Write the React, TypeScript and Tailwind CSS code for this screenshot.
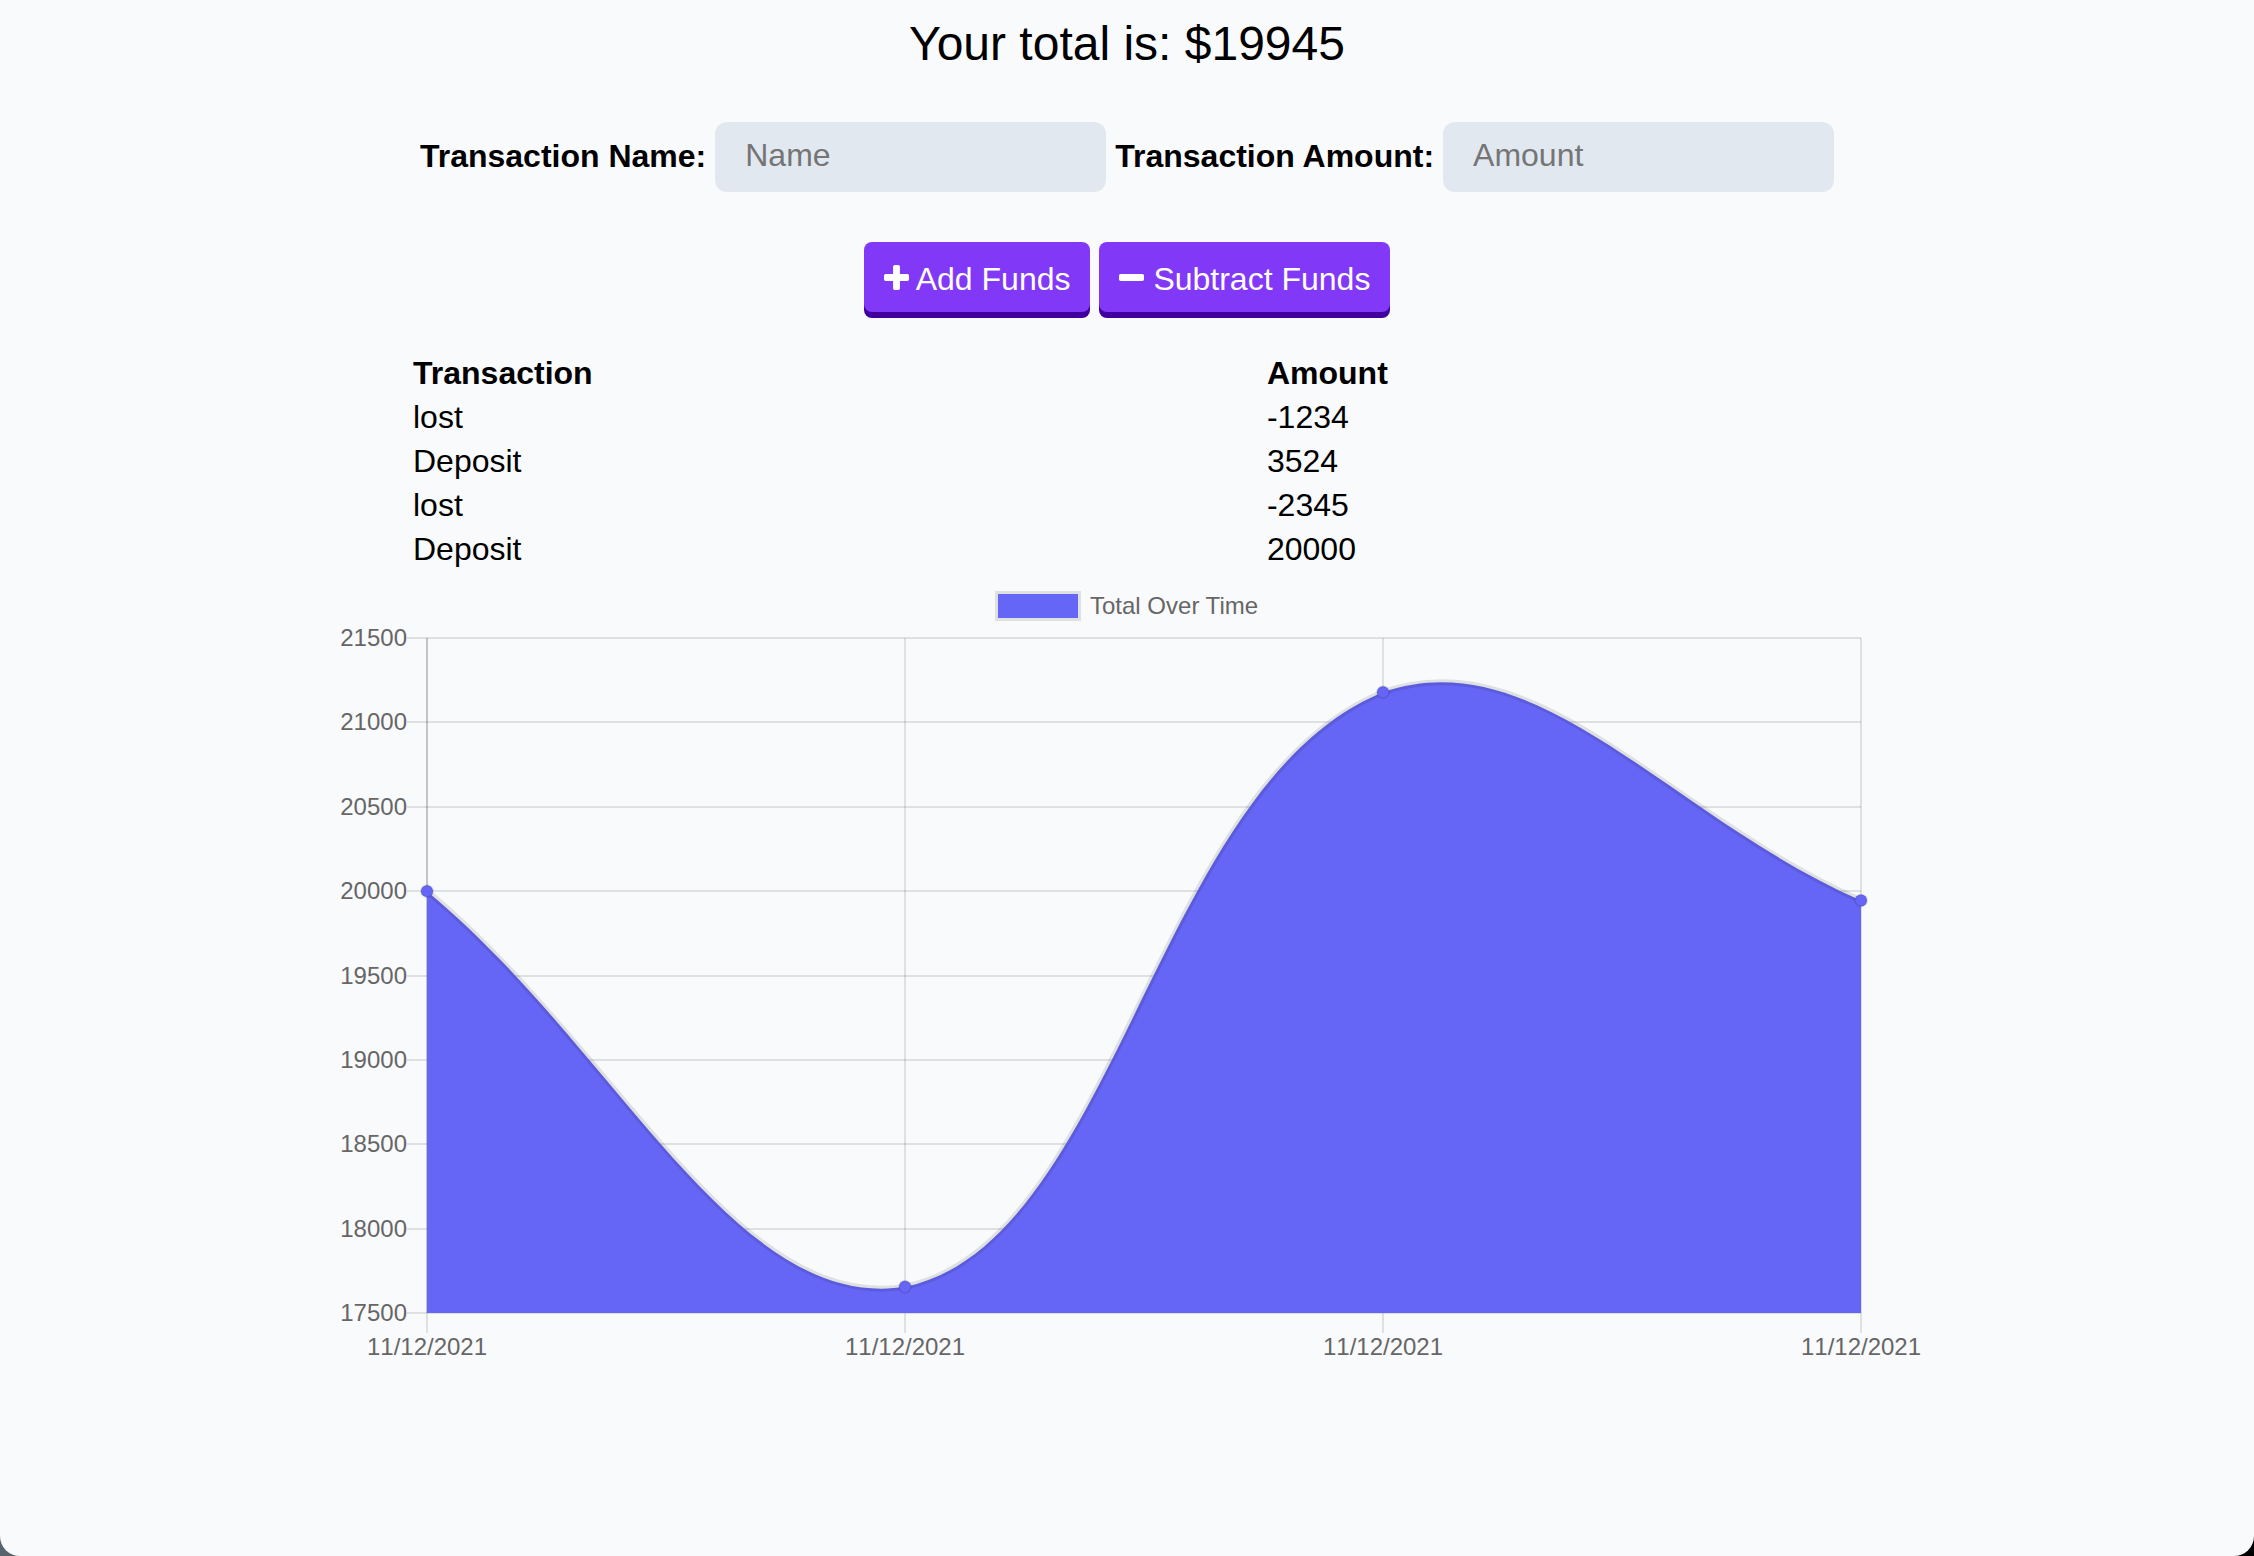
import React from "react";

type Point = { x: number; y: number };

const transactions = [
  { name: "lost", amount: "-1234" },
  { name: "Deposit", amount: "3524" },
  { name: "lost", amount: "-2345" },
  { name: "Deposit", amount: "20000" },
];

const totals = [
  { date: "11/12/2021", value: 20000 },
  { date: "11/12/2021", value: 17655 },
  { date: "11/12/2021", value: 21179 },
  { date: "11/12/2021", value: 19945 },
];

const ticks = [21500, 21000, 20500, 20000, 19500, 19000, 18500, 18000, 17500];

const area = { left: 96, right: 1530, top: 67, bottom: 742 };
const tension = 0.4;

const xAt = (i: number) => area.left + (i * (area.right - area.left)) / (totals.length - 1);
const yAt = (v: number) => area.top + ((21500 - v) / 4000) * (area.bottom - area.top);

const distance = (a: Point, b: Point) => Math.hypot(a.x - b.x, a.y - b.y);

// Control points stay inside the plot so the curve never overshoots it.
const cap = (p: Point): Point => ({
  x: Math.min(Math.max(p.x, area.left), area.right),
  y: Math.min(Math.max(p.y, area.top), area.bottom),
});

function controls(points: Point[], i: number) {
  const cur = points[i];
  const prev = points[i - 1] ?? cur;
  const next = points[i + 1] ?? cur;
  const before = distance(prev, cur);
  const after = distance(cur, next);
  const fa = (tension * before) / (before + after);
  const fb = (tension * after) / (before + after);
  return {
    incoming: cap({ x: cur.x - fa * (next.x - prev.x), y: cur.y - fa * (next.y - prev.y) }),
    outgoing: cap({ x: cur.x + fb * (next.x - prev.x), y: cur.y + fb * (next.y - prev.y) }),
  };
}

function curve(points: Point[]) {
  let d = `M${points[0].x} ${points[0].y}`;
  for (let i = 1; i < points.length; i++) {
    const a = controls(points, i - 1).outgoing;
    const b = controls(points, i).incoming;
    d += ` C${a.x} ${a.y} ${b.x} ${b.y} ${points[i].x} ${points[i].y}`;
  }
  return d;
}

function TotalChart() {
  const points = totals.map((t, i) => ({ x: xAt(i), y: yAt(t.value) }));
  const line = curve(points);
  return (
    <svg
      viewBox="0 0 1592 796"
      role="img"
      aria-label="Total Over Time"
      className="block w-full max-w-[1592px] text-[24px] [font-family:'Liberation_Sans',Arial,sans-serif]"
    >
      <defs>
        <clipPath id="chart-area">
          <rect x={area.left} y={area.top} width={area.right - area.left} height={area.bottom - area.top} />
        </clipPath>
      </defs>

      <rect x="667" y="23" width="80" height="24" fill="none" stroke="#000" strokeOpacity="0.1" strokeWidth="6" />
      <rect x="667" y="23" width="80" height="24" fill="#6666f6" />
      <text x="759" y="43" fill="#666">
        Total Over Time
      </text>

      {totals.map((t, i) => (
        <g key={i}>
          <line
            x1={Math.round(xAt(i))}
            x2={Math.round(xAt(i))}
            y1={area.top}
            y2={area.bottom + 20}
            stroke="#000"
            strokeOpacity="0.1"
            strokeWidth="2"
          />
          <text x={xAt(i)} y="784" textAnchor="middle" fill="#666" className="[font-kerning:none]">
            {t.date}
          </text>
        </g>
      ))}
      <line x1={area.left} x2={area.left} y1={area.top} y2={area.bottom} stroke="#000" strokeOpacity="0.12" strokeWidth="2" />
      {ticks.map((v) => (
        <g key={v}>
          <line
            x1={area.left - 20}
            x2={area.right}
            y1={Math.round(yAt(v))}
            y2={Math.round(yAt(v))}
            stroke="#000"
            strokeOpacity="0.1"
            strokeWidth="2"
          />
          <text x={area.left - 20} y={Math.round(yAt(v)) + 8} textAnchor="end" fill="#666">
            {v}
          </text>
        </g>
      ))}

      <g clipPath="url(#chart-area)">
        <path d={`${line} L${area.right} ${area.bottom} L${area.left} ${area.bottom} Z`} fill="#6666f6" />
        <path d={line} fill="none" stroke="#000" strokeOpacity="0.1" strokeWidth="6" />
      </g>
      {points.map((p, i) => (
        <circle key={i} cx={p.x} cy={p.y} r="6" fill="#6666f6" stroke="#000" strokeOpacity="0.1" strokeWidth="2" />
      ))}
    </svg>
  );
}

function PlusIcon() {
  return (
    <svg viewBox="0 0 22 22" aria-hidden="true" className="inline-block size-[25px] align-baseline" fill="currentColor">
      <path d="M22 9.5v3q0 .625-.438 1.063T20.5 14H14v6.500q0 .625-.438 1.063T12.500 22h-3q-.625 0-1.063-.438T8 20.500V14H1.500q-.625 0-1.063-.438T0 12.500v-3q0-.625.438-1.063T1.500 8H8V1.500q0-.625.438-1.063T9.500 0h3q.625 0 1.063.438T14 1.500V8h6.500q.625 0 1.063.438T22 9.500z" />
    </svg>
  );
}

function MinusIcon() {
  return (
    <svg viewBox="0 0 22 22" aria-hidden="true" className="inline-block size-[25px] align-baseline" fill="currentColor">
      <path d="M22 9.500v3q0 .625-.438 1.063T20.500 14h-19q-.625 0-1.063-.438T0 12.500v-3q0-.625.438-1.063T1.500 8h19q.625 0 1.063.438T22 9.500z" />
    </svg>
  );
}

const buttonClass =
  "h-[70px] cursor-pointer whitespace-nowrap rounded-lg bg-[#8139f7] px-5 pt-1 text-[32px] leading-[36px] text-white shadow-[0_6px_0_#41009e]";
const inputClass =
  "h-[70px] w-[391px] rounded-xl bg-slate-200 px-[30px] pb-1 text-[32px] text-black placeholder:text-[#757575] placeholder:opacity-100";
const labelClass = "whitespace-nowrap pb-0.5 text-[32px] leading-[36px] font-bold";

export default function App() {
  return (
    <div className="min-h-screen bg-linear-to-r from-[#59636b] to-black text-black [font-family:'Liberation_Sans',Arial,sans-serif]">
      <main className="flex min-h-screen flex-col items-center rounded-b-[20px] bg-[#f9fafc] pt-4">
        <h1 className="text-[48px] leading-[56px]">
          Your total is: $<span>19945</span>
        </h1>

        <form className="mt-[50px] flex flex-col items-center gap-[50px]" onSubmit={(e) => e.preventDefault()}>
          <div className="flex flex-wrap items-center justify-center gap-[9px]">
            <label htmlFor="t-name" className={labelClass}>
              Transaction Name:
            </label>
            <input id="t-name" type="text" placeholder="Name" className={inputClass} />
            <label htmlFor="t-amount" className={labelClass}>
              Transaction Amount:
            </label>
            <input id="t-amount" type="text" inputMode="decimal" placeholder="Amount" className={inputClass} />
          </div>
          <div className="flex flex-wrap justify-center gap-[9px]">
            <button type="button" className={buttonClass}>
              <PlusIcon /> Add Funds
            </button>
            <button type="button" className={buttonClass}>
              <MinusIcon /> Subtract Funds
            </button>
          </div>
        </form>

        <table className="mt-[39px] w-full max-w-[1428px] table-fixed text-left text-[32px] leading-[44px]">
          <colgroup>
            <col className="w-[59.8%]" />
            <col />
          </colgroup>
          <thead>
            <tr>
              <th scope="col">Transaction</th>
              <th scope="col">Amount</th>
            </tr>
          </thead>
          <tbody>
            {transactions.map((t, i) => (
              <tr key={i}>
                <td>{t.name}</td>
                <td>{t.amount}</td>
              </tr>
            ))}
          </tbody>
        </table>

        <TotalChart />
      </main>
    </div>
  );
}
